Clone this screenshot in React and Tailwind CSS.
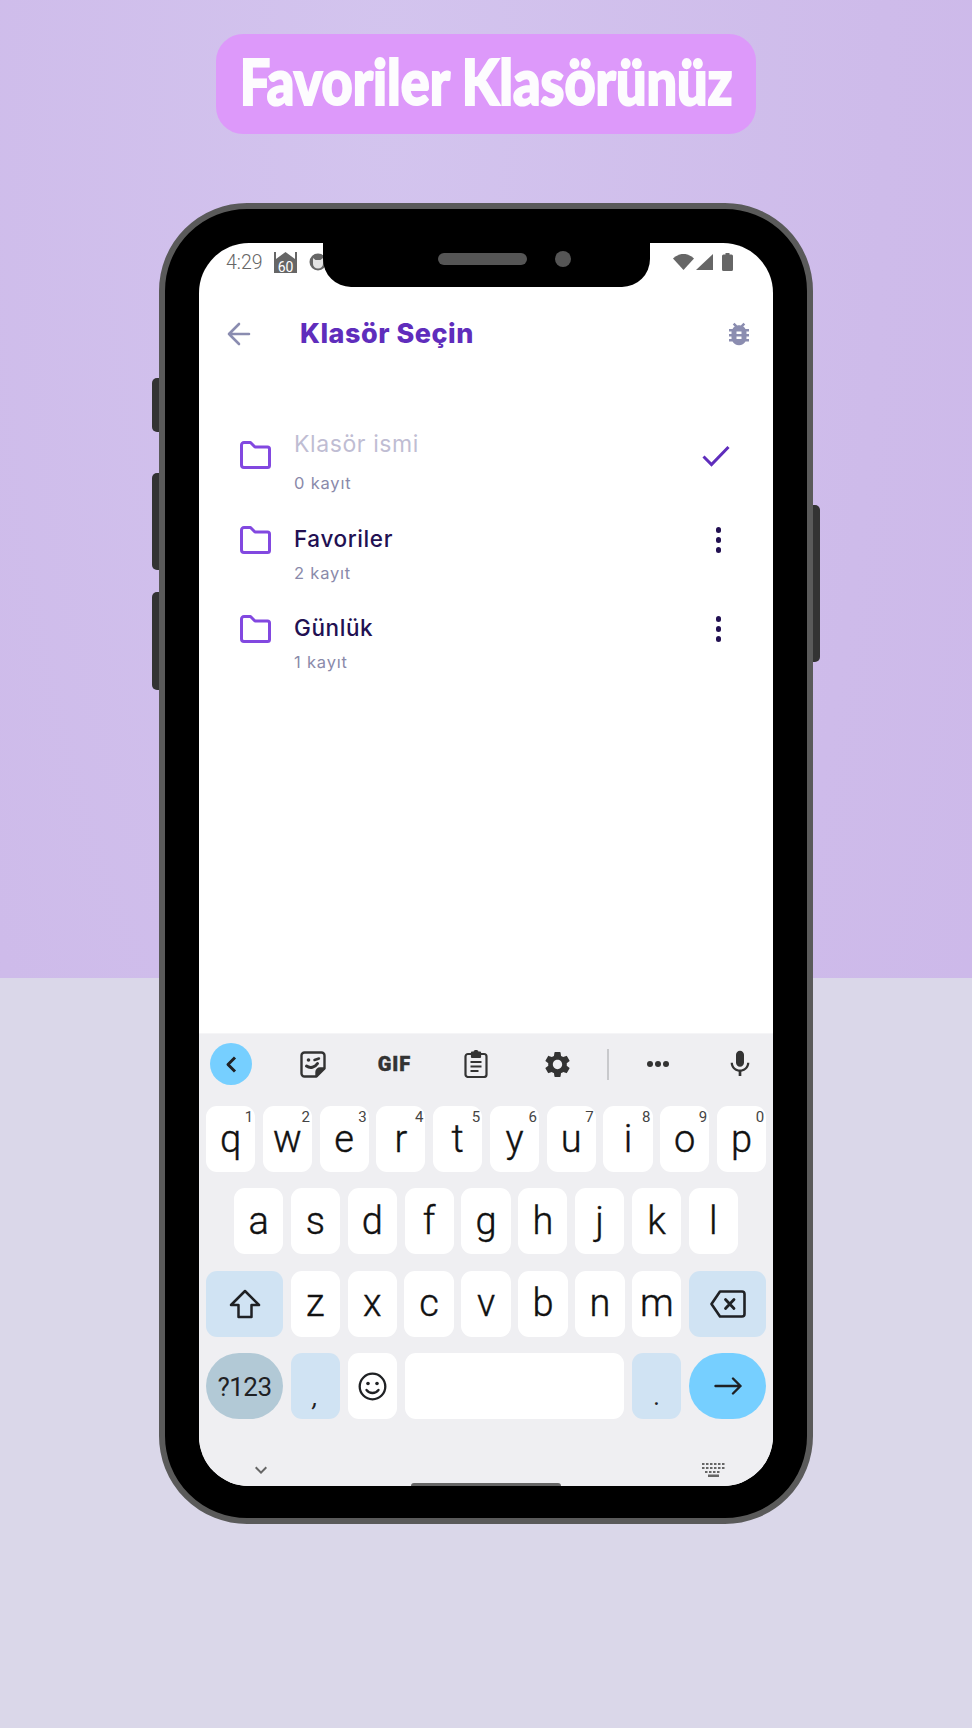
import React from 'react';
import {
    MdBugReport,
    MdSettings,
    MdMic,
    MdKeyboardArrowDown,
} from 'react-icons/md';

const FolderIcon = () => (
    <svg width="31" height="28" viewBox="0 0 31 28" fill="none" stroke="#8248e0" strokeWidth="3" strokeLinejoin="round">
        <path d="M4 1.500h6.500l4.500 4.500h12.500a2 2 0 0 1 2 2v16.500a2 2 0 0 1-2 2h-23.500a2.500 2.500 0 0 1-2.500-2.500v-20a2.500 2.500 0 0 1 2.500-2.500z" />
    </svg>
);

const Dots = () => (
    <div className="flex flex-col items-center gap-[4.500px]">
        <div className="w-[5.500px] h-[5.500px] rounded-full bg-[#221052]"></div>
        <div className="w-[5.500px] h-[5.500px] rounded-full bg-[#221052]"></div>
        <div className="w-[5.500px] h-[5.500px] rounded-full bg-[#221052]"></div>
    </div>
);

const FolderRow = ({ name, count }) => (
    <div className="flex items-start h-[89px] pl-[41px]">
        <div className="mt-[6px] w-[31px]"><FolderIcon /></div>
        <div className="ml-[23px] flex-1">
            <div className="h-[38px] leading-[38px] text-[22.500px] tracking-[0.6px] font-medium text-[#221052]">{name}</div>
            <div className="h-[30px] leading-[30px] text-[16.500px] tracking-[0.8px] text-[#8a8aaa]">{count}</div>
        </div>
        <div className="mt-[7px] mr-[52px]"><Dots /></div>
    </div>
);

const Key = ({ label, digit }) => (
    <div className="relative flex-1 h-full rounded-[11px] bg-white flex items-center justify-center text-[38px] font-light text-[#111] [-webkit-text-stroke:0.4px_#111]">
        {label}
        {digit && <span className="absolute top-[1px] right-[2px] text-[15px] leading-[20px] font-normal text-[#444] [-webkit-text-stroke:0]">{digit}</span>}
    </div>
);

const row1 = [['q', '1'], ['w', '2'], ['e', '3'], ['r', '4'], ['t', '5'], ['y', '6'], ['u', '7'], ['i', '8'], ['o', '9'], ['p', '0']];
const row2 = ['a', 's', 'd', 'f', 'g', 'h', 'j', 'k', 'l'];
const row3 = ['z', 'x', 'c', 'v', 'b', 'n', 'm'];

const Keyboard = () => (
    <div className="h-[453px] flex flex-col bg-[#efeff2] border-t border-[#f5f5f7] font-['Roboto',sans-serif]">
        <div className="h-[60px] shrink-0 flex items-center pl-[11px] text-[#333]">
            <div className="w-[42px] h-[42px] rounded-full bg-[#76cfff] flex items-center justify-center">
                <svg width="12" height="17" viewBox="0 0 12 17" fill="none" stroke="#1f2124" strokeWidth="3" strokeLinejoin="round">
                    <path d="M10 1.500l-7 7 7 7" />
                </svg>
            </div>
            <svg className="ml-[48px]" width="26" height="27" viewBox="0 0 26 27" fill="none" stroke="#333" strokeWidth="2.400" strokeLinejoin="round">
                <path d="M4.500 1.500h17a3 3 0 0 1 3 3v13l-8 8h-12a3 3 0 0 1-3-3v-18a3 3 0 0 1 3-3z" />
                <path d="M24.500 17.500h-4.500a3.500 3.500 0 0 0-3.500 3.500v4.500" fill="#333" />
                <path d="M6.500 15c3.500 2.500 8.500 1.500 11-2.500" strokeWidth="3" strokeLinecap="round" />
                <circle cx="8.500" cy="9" r="1.800" fill="#333" stroke="none" />
                <path d="M14.500 9l4.500-1.500" strokeLinecap="round" />
            </svg>
            <span className="ml-[51px] w-[35px] text-center text-[20px] leading-[20px] font-black tracking-[1px] text-[#333] [-webkit-text-stroke:0.4px_#333]">GIF</span>
            <svg className="ml-[52px]" width="24" height="28" viewBox="0 0 24 28" fill="none" stroke="#333" strokeWidth="2.200" strokeLinejoin="round">
                <rect x="1.500" y="4" width="21" height="23" rx="2.500" />
                <path d="M8 2.500h2.500a1.500 1.500 0 0 1 3 0h2.500v4.500h-8z" fill="#333" />
                <path d="M6.500 12h11M6.500 16.500h11M6.500 21h8" />
            </svg>
            <div className="ml-[54px]"><MdSettings size={31} color="#333" /></div>
            <div className="ml-[34px] w-[1.500px] h-[31px] bg-[#c8c9cc]"></div>
            <div className="ml-[38px] flex gap-[2px]">
                <div className="w-[6px] h-[6px] rounded-full bg-[#333]"></div>
                <div className="w-[6px] h-[6px] rounded-full bg-[#333]"></div>
                <div className="w-[6px] h-[6px] rounded-full bg-[#333]"></div>
            </div>
            <div className="ml-[55px]"><MdMic size={32} color="#333" /></div>
        </div>
        <div className="mt-[12px] px-[7px] flex flex-col gap-[16.400px]">
            <div className="h-[66px] flex gap-[7.600px]">
                {row1.map(([label, digit]) => <Key key={label} label={label} digit={digit} />)}
            </div>
            <div className="h-[66px] flex gap-[7.600px] px-[28px]">
                {row2.map((label) => <Key key={label} label={label} />)}
            </div>
            <div className="h-[66px] flex gap-[7.600px]">
                <div className="w-[77px] shrink-0 rounded-[11px] bg-[#d0e3f3] flex items-center justify-center">
                    <svg width="32" height="30" viewBox="0 0 32 30" fill="none" stroke="#1f2124" strokeWidth="2.500" strokeLinejoin="round">
                        <path d="M16 2l14 14h-7.500v12h-13v-12h-7.500z" />
                    </svg>
                </div>
                {row3.map((label) => <Key key={label} label={label} />)}
                <div className="w-[77px] shrink-0 rounded-[11px] bg-[#d0e3f3] flex items-center justify-center">
                    <svg width="36" height="28" viewBox="0 0 36 28" fill="none" stroke="#1f2124" strokeWidth="2.600" strokeLinejoin="round">
                        <path d="M10 1.500h22a2.500 2.500 0 0 1 2.500 2.500v20a2.500 2.500 0 0 1-2.500 2.500h-22l-8.500-12.500z" />
                        <path d="M15.500 9.500l8.500 9M24 9.500l-8.500 9" strokeLinecap="round" strokeWidth="2.800" />
                    </svg>
                </div>
            </div>
            <div className="h-[66px] flex gap-[7.600px]">
                <div className="w-[77px] shrink-0 rounded-full bg-[#b2c9d6] flex items-center justify-center pt-[2px] text-[26px] tracking-[-0.5px] text-[#1f2124]">?123</div>
                <div className="w-[49.500px] shrink-0 rounded-[11px] bg-[#d0e3f3] flex items-center justify-center pt-[23px] text-[25px] italic text-[#1f2124]">,</div>
                <div className="w-[49.500px] shrink-0 rounded-[11px] bg-white flex items-center justify-center">
                    <svg width="29" height="29" viewBox="0 0 29 29" fill="none" stroke="#1f2124" strokeWidth="2.300" strokeLinecap="round">
                        <circle cx="14.500" cy="14.500" r="12.800" />
                        <circle cx="10" cy="11.500" r="1.800" fill="#1f2124" stroke="none" />
                        <circle cx="19" cy="11.500" r="1.800" fill="#1f2124" stroke="none" />
                        <path d="M8.500 18c3 4 9 4 12 0" />
                    </svg>
                </div>
                <div className="flex-1 rounded-[11px] bg-white"></div>
                <div className="w-[49.500px] shrink-0 rounded-[11px] bg-[#d0e3f3] flex items-center justify-center pt-[22px] text-[25px] text-[#1f2124]">.</div>
                <div className="w-[77px] shrink-0 rounded-full bg-[#76cfff] flex items-center justify-center">
                    <svg width="28" height="18" viewBox="0 0 28 18" fill="none" stroke="#1f2124" strokeWidth="2.400" strokeLinecap="round" strokeLinejoin="round">
                        <path d="M1.500 9h25M19 1.500l7.500 7.500-7.500 7.500" />
                    </svg>
                </div>
            </div>
        </div>
        <div className="mt-auto mb-[4px] h-[24px] flex items-center justify-between pl-[50px] pr-[48px]">
            <MdKeyboardArrowDown size={24} color="#666" />
            <svg width="23" height="14" viewBox="0 0 23 14" fill="#666">
                <path d="M0 0h2.500v2h-2.500zM4 0h2.500v2h-2.500zM8 0h2.500v2h-2.500zM12 0h2.500v2h-2.500zM16 0h2.500v2h-2.500zM20 0h2.500v2h-2.500zM0 4h2.500v2h-2.500zM4 4h2.500v2h-2.500zM8 4h2.500v2h-2.500zM12 4h2.500v2h-2.500zM16 4h2.500v2h-2.500zM20 4h2.500v2h-2.500zM3 8h2.500v2h-2.500zM7 8h2.500v2h-2.500zM11 8h2.500v2h-2.500zM15 8h2.500v2h-2.500zM6 11.500h11v2.500h-11z" />
            </svg>
        </div>
    </div>
);

const App = () => {
    return (
        <div className="w-[972px] h-[1728px] overflow-hidden flex flex-col items-center pt-[34px] font-['Inter',sans-serif] bg-[linear-gradient(to_bottom,transparent_978px,#dad7e9_978px),radial-gradient(ellipse_at_40%_5%,#d3c4ee_0%,#cebbea_60%,#ccb7e9_100%)]">
            <div className="w-[540px] h-[100px] shrink-0 rounded-[27px] bg-[#dd99fa] flex items-center justify-center">
                <span className="whitespace-nowrap scale-x-[0.87] mb-[6px] text-[62px] leading-[80px] font-black text-[#fdfcfe] font-['Lato',sans-serif] [-webkit-text-stroke:2px_#fdfcfe]">
                    Favoriler Klasörünüz
                </span>
            </div>

            <div className="relative mt-[69px] w-[654px] h-[1321px] shrink-0 rounded-[88px] border-[6px] border-[#5a5a5a] bg-black pt-[34px] px-[34px]">
                {/* side buttons */}
                <div className="absolute left-[-13px] top-[169px] w-[7px] h-[54px] rounded-l-[5px] bg-[#333]"></div>
                <div className="absolute left-[-13px] top-[264px] w-[7px] h-[97px] rounded-l-[5px] bg-[#333]"></div>
                <div className="absolute left-[-13px] top-[383px] w-[7px] h-[98px] rounded-l-[5px] bg-[#333]"></div>
                <div className="absolute right-[-13px] top-[296px] w-[7px] h-[157px] rounded-r-[5px] bg-[#333]"></div>

                <div className="relative h-[1243px] rounded-[50px] overflow-hidden bg-white flex flex-col">
                    <div className="h-[38px] shrink-0 flex items-center pl-[27px] pr-[40px] text-[#666]">
                        <span className="pt-[2px] text-[19.500px] font-light font-['Roboto',sans-serif]">4:29</span>
                        <svg className="ml-[11px]" width="23" height="21" viewBox="0 0 23 21">
                            <path d="M0 0h2v7l9.500-7 9.500 7v-7h2v21h-23z" fill="#666" />
                            <text x="11.500" y="19.500" textAnchor="middle" fontSize="14" fill="#fff" fontFamily="Roboto">60</text>
                        </svg>
                        <svg className="ml-[12px]" width="18" height="18" viewBox="0 0 18 18">
                            <circle cx="9" cy="9" r="8.500" fill="#666" />
                            <path d="M4 5l2.500 2h5l2.500-2v6a5 4.500 0 0 1-10 0z" fill="#e4e4e4" />
                        </svg>
                        <div className="ml-auto flex items-center">
                            <svg width="21" height="16" viewBox="0 0 21 16" fill="#666">
                                <path d="M0 4.500c6-6 15-6 21 0l-10.500 11.500z" />
                            </svg>
                            <svg className="ml-[2px]" width="17" height="16" viewBox="0 0 17 16" fill="#666">
                                <path d="M17 0v16h-17z" />
                            </svg>
                            <svg className="ml-[9px]" width="11" height="18" viewBox="0 0 11 18" fill="#666">
                                <path d="M3.500 0h4v1.500h2a1.500 1.500 0 0 1 1.500 1.500v13.500a1.500 1.500 0 0 1-1.500 1.500h-8a1.500 1.500 0 0 1-1.500-1.500v-13.500a1.500 1.500 0 0 1 1.500-1.500h2z" />
                            </svg>
                        </div>
                    </div>

                    <div className="mt-[23px] h-[60px] shrink-0 flex items-center pl-[28px] pr-[19px]">
                        <svg width="24" height="24" viewBox="0 0 24 24" fill="none" stroke="#8a8cb0" strokeWidth="2.600" strokeLinecap="round" strokeLinejoin="round">
                            <path d="M22 12h-20M12 2l-10 10 10 10" />
                        </svg>
                        <h1 className="ml-[49px] pt-[1px] text-[27px] tracking-[0.5px] font-extrabold text-[#5f2dbc]">Klasör Seçin</h1>
                        <MdBugReport size={30} color="#8b8db0" className="ml-auto" />
                    </div>

                    <div className="mt-[61px] shrink-0">
                        <div className="flex items-start h-[95px] pl-[41px]">
                            <div className="mt-[16px] w-[31px]"><FolderIcon /></div>
                            <div className="ml-[23px] flex-1">
                                <div className="h-[38px] leading-[38px] text-[23px] tracking-[0.6px] text-[#bfbdd3]">Klasör ismi</div>
                                <div className="mt-[5px] h-[30px] leading-[30px] text-[16.500px] tracking-[0.8px] text-[#8a8aaa]">0 kayıt</div>
                            </div>
                            <svg className="mt-[20px] mr-[43px]" width="28" height="22" viewBox="0 0 28 22" fill="none" stroke="#5f2dbc" strokeWidth="3">
                                <path d="M1.500 11.500l8 8 17-17.500" />
                            </svg>
                        </div>
                        <FolderRow name="Favoriler" count="2 kayıt" />
                        <FolderRow name="Günlük" count="1 kayıt" />
                    </div>

                    <div className="mt-auto">
                        <Keyboard />
                    </div>

                    <div className="absolute bottom-0 left-[212px] w-[150px] h-[3px] rounded-t-[3px] bg-[#666]"></div>
                </div>

                {/* notch */}
                <div className="absolute top-[34px] left-[158px] w-[327px] h-[44px] rounded-b-[28px] bg-black pt-[4px] pl-[115px] flex items-start">
                    <div className="h-[24px] flex items-center gap-[28px]">
                        <div className="w-[89px] h-[12px] rounded-full bg-[#555]"></div>
                        <div className="w-[16px] h-[16px] rounded-full bg-[#555]"></div>
                    </div>
                </div>
            </div>
        </div>
    );
};

export default App;
